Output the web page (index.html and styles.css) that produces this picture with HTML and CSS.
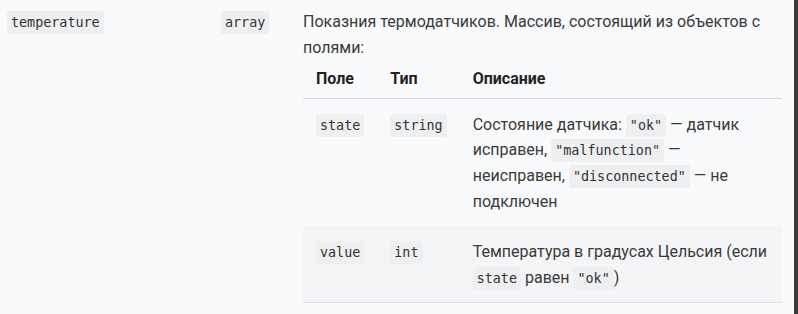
FILE: index.html
```html
<!DOCTYPE html>
<html lang="ru">
<head>
<meta charset="utf-8">
<link rel="stylesheet" href="styles.css">
</head>
<body>
<div class="page">
  <div class="content">
    <div class="row">
      <div class="cell"><code>temperature</code></div>
      <div class="cell"><code>array</code></div>
      <div class="cell desc">
        <p class="lead">Показния термодатчиков. Массив, состоящий из объектов с полями:</p>
        <table class="fields">
          <thead>
            <tr><th>Поле</th><th>Тип</th><th>Описание</th></tr>
          </thead>
          <tbody>
            <tr>
              <td><code>state</code></td>
              <td><code>string</code></td>
              <td>Состояние датчика: <code>"ok"</code> — датчик исправен, <code>"malfunction"</code> — неисправен, <code>"disconnected"</code> — не подключен</td>
            </tr>
            <tr class="alt">
              <td><code>value</code></td>
              <td><code>int</code></td>
              <td>Температура в градусах Цельсия (если <code>state</code> равен <code>"ok"</code>)</td>
            </tr>
          </tbody>
        </table>
      </div>
    </div>
  </div>
  <div class="scrollbar"></div>
</div>
</body>
</html>
```
FILE: styles.css
```css
html, body {
  margin: 0;
  padding: 0;
  height: 100%;
}
body {
  background: #f9fafb;
  color: #3a3a3a;
  font-family: Roboto, "Liberation Sans", Arial, sans-serif;
  font-size: 16px;
  line-height: 1.6;
}
.page {
  display: flex;
  height: 314px;
  overflow: hidden;
}
.content {
  flex: 1;
  padding: 9px 0 0 7px;
}
.scrollbar {
  width: 4px;
  background: #3b3b3b;
}
.row {
  display: grid;
  grid-template-columns: 214px 82px 479px;
}
code {
  font-family: "DejaVu Sans Mono", "Liberation Mono", monospace;
  font-size: 13.4px;
  background: #eeeff1;
  border-radius: 3px;
  padding: 4px 4px;
  color: #333;
}
.lead {
  margin: 0;
}
.fields {
  width: 100%;
  border-collapse: collapse;
}
.fields th {
  text-align: left;
  font-weight: bold;
  color: #222;
  padding: 6px 13px 6px 13px;
  border-bottom: 1px solid #d2d5da;
}
.fields td {
  vertical-align: top;
  padding: 13px 13px 12px 13px;
  border-bottom: 1px solid #dfe2e6;
}
.fields tbody tr:first-child td {
  border-bottom: none;
}
.fields tr.alt td {
  background: #f4f5f7;
}
```
